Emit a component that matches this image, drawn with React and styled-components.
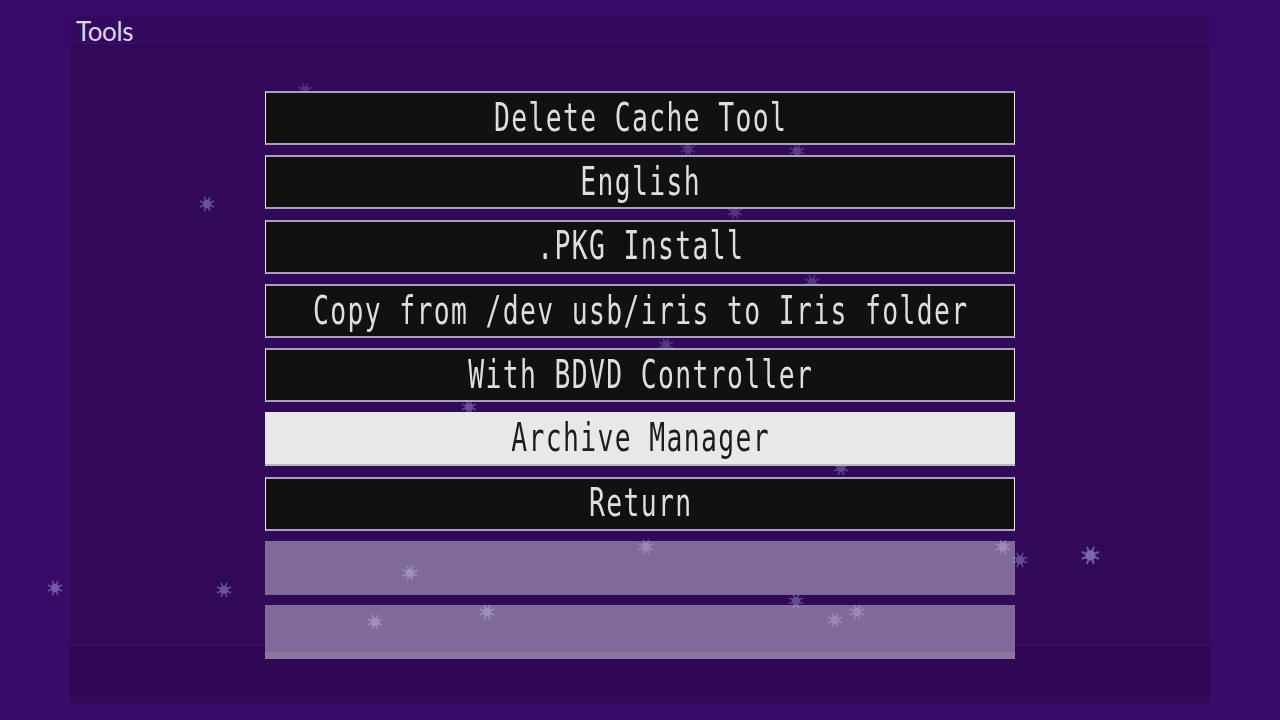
import React from "react";
import styled, { createGlobalStyle } from "styled-components";

const Global = createGlobalStyle`
  html, body { margin: 0; padding: 0; background: #3a0a68; }
  body { width: 1280px; height: 720px; overflow: hidden; }
`;

const Screen = styled.div`
  position: relative;
  width: 1280px;
  height: 720px;
  box-sizing: border-box;
  padding: 16px 70px 17px;
  background: #3a0a68;
  display: flex;
  flex-direction: column;
  overflow: hidden;
`;

const Panel = styled.div`
  flex: 1;
  display: flex;
  flex-direction: column;
`;

const HeaderBand = styled.div`
  height: 27px;
  background: #330a5e;
  border-bottom: 1px solid #3d0e70;
  display: flex;
  align-items: center;
  padding-left: 6px;
  position: relative;
`;

const Title = styled.h1`
  margin: 0;
  margin-top: 3px;
  font-family: Lato, "Open Sans", sans-serif;
  font-weight: 400;
  font-size: 26px;
  letter-spacing: -0.4px;
  color: #ddd4ea;
  line-height: 1;
`;

const Body = styled.div`
  flex: 1;
  background: linear-gradient(
    to bottom,
    #300a58 0,
    #300a58 600px,
    #390c6a 600px,
    #390c6a 602px,
    #2f0955 602px,
    #2f0955 100%
  );
  display: flex;
  justify-content: center;
  padding-top: 47px;
`;

const Menu = styled.ul`
  list-style: none;
  margin: 0;
  padding: 0;
  width: 750px;
  display: flex;
  flex-direction: column;
  gap: 10.25px;
  position: relative;
  z-index: 2;
`;

const Row = styled.li`
  box-sizing: border-box;
  height: 54px;
  display: flex;
  align-items: center;
  justify-content: center;
  background: ${(p) =>
    p.$variant === "selected"
      ? "#e8e8e8"
      : p.$variant === "empty"
      ? "rgba(200, 190, 215, 0.53)"
      : "#111111"};
  border-top: ${(p) => (p.$variant === "normal" ? "2px solid #ab9cc0" : "none")};
  border-bottom: ${(p) =>
    p.$variant === "normal"
      ? "2px solid #ab9cc0"
      : p.$variant === "selected"
      ? "2px solid #b8b4c0"
      : p.$last
      ? "7px solid rgba(150, 130, 170, 0.55)"
      : "1px solid rgba(120, 100, 150, 0.5)"};
  border-left: ${(p) => (p.$variant === "normal" ? "1px solid #ece8f2" : "none")};
  border-right: ${(p) => (p.$variant === "normal" ? "1px solid #ece8f2" : "none")};
`;

const Label = styled.span`
  display: inline-block;
  font-family: "DejaVu Sans Mono", "Liberation Mono", monospace;
  font-size: 26.4px;
  letter-spacing: 1.36px;
  margin-right: -1.36px;
  line-height: 1;
  white-space: pre;
  color: ${(p) => (p.$dark ? "#1c1c1c" : "#dedede")};
  transform: scaleY(1.47);
`;

const SparkleLayer = styled.div`
  position: absolute;
  inset: 0;
  z-index: 1;
  pointer-events: none;
`;

const SparkleWrap = styled.svg`
  position: absolute;
  overflow: visible;
  filter: blur(0.7px);
`;

function Sparkle({ x, y, s = 1, o = 0.6 }) {
  const r = 7 * s;
  const rays = [];
  for (let i = 0; i < 8; i++) {
    const a = (i * Math.PI) / 4 + Math.PI / 8;
    rays.push(
      <line
        key={i}
        x1={0}
        y1={0}
        x2={Math.cos(a) * r}
        y2={Math.sin(a) * r}
        stroke="#8f82c4"
        strokeWidth={1.8 * s}
        strokeLinecap="round"
      />
    );
  }
  return (
    <SparkleWrap
      width={r * 2}
      height={r * 2}
      viewBox={`${-r} ${-r} ${r * 2} ${r * 2}`}
      style={{ left: x - r, top: y - r, opacity: o }}
    >
      {rays}
      <circle r={4.2 * s} fill="#a89cd8" />
    </SparkleWrap>
  );
}

const sparkles = [
  { x: 207, y: 204, o: 0.5 },
  { x: 55, y: 588, o: 0.55 },
  { x: 224, y: 590, o: 0.5 },
  { x: 410, y: 573, o: 0.55 },
  { x: 375, y: 622, o: 0.55 },
  { x: 487, y: 612, o: 0.55 },
  { x: 646, y: 547, o: 0.45 },
  { x: 796, y: 601, o: 0.45 },
  { x: 835, y: 620, o: 0.45 },
  { x: 857, y: 612, o: 0.45 },
  { x: 1003, y: 547, o: 0.5 },
  { x: 1020, y: 560, o: 0.45 },
  { x: 1090, y: 555, s: 1.2, o: 0.65 },
  { x: 469, y: 407, o: 0.45 },
  { x: 841, y: 468, o: 0.4 },
  { x: 797, y: 151, o: 0.35 },
  { x: 735, y: 212, o: 0.3 },
  { x: 812, y: 282, o: 0.3 },
  { x: 666, y: 345, o: 0.3 },
  { x: 688, y: 149, o: 0.3 },
  { x: 305, y: 90, o: 0.25 },
];

const items = [
  { label: "Delete Cache Tool", variant: "normal" },
  { label: "English", variant: "normal" },
  { label: ".PKG Install", variant: "normal" },
  { label: "Copy from /dev usb/iris to Iris folder", variant: "normal" },
  { label: "With BDVD Controller", variant: "normal" },
  { label: "Archive Manager", variant: "selected" },
  { label: "Return", variant: "normal" },
  { label: "", variant: "empty" },
  { label: "", variant: "empty", last: true },
];

export default function App() {
  return (
    <>
      <Global />
      <Screen>
        <SparkleLayer>
          {sparkles.map((s, i) => (
            <Sparkle key={i} {...s} />
          ))}
        </SparkleLayer>
        <Panel>
          <HeaderBand>
            <Title>Tools</Title>
          </HeaderBand>
          <Body>
            <Menu>
              {items.map((it, i) => (
                <Row key={i} $variant={it.variant} $last={it.last}>
                  {it.label && (
                    <Label $dark={it.variant === "selected"}>{it.label}</Label>
                  )}
                </Row>
              ))}
            </Menu>
          </Body>
        </Panel>
      </Screen>
    </>
  );
}
